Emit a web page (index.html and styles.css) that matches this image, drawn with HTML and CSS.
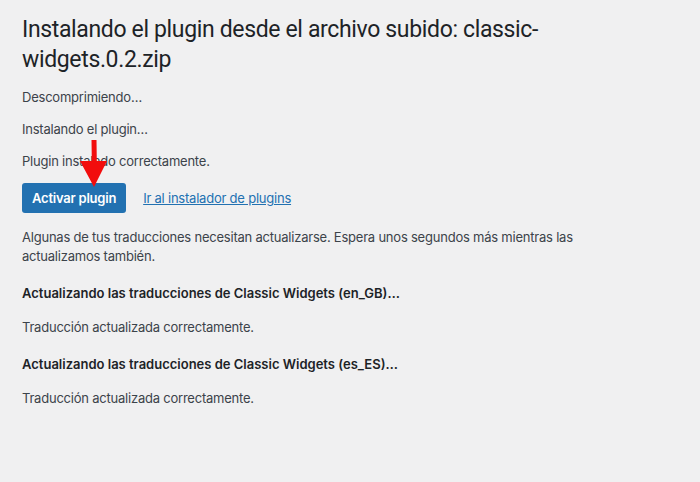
FILE: index.html
```html
<!DOCTYPE html>
<html lang="es">
<head>
    <meta charset="UTF-8">
    <meta name="viewport" content="width=device-width, initial-scale=1.0">
    <title>Instalar plugin</title>
    <link rel="stylesheet" href="styles.css">
</head>
<body>

    <div class="wrap">
        <h1>Instalando el plugin desde el archivo subido: classic-widgets.0.2.zip</h1>

        <p>Descomprimiendo…</p>
        <p>Instalando el plugin…</p>
        <p>Plugin instalado correctamente.</p>

        <p class="actions">
            <a href="#" class="button-primary">Activar plugin</a>
            <a href="#" class="link">Ir al instalador de plugins</a>
        </p>

        <div class="update-messages">
            <p>Algunas de tus traducciones necesitan actualizarse. Espera unos segundos más mientras las actualizamos también.</p>

            <h2>Actualizando las traducciones de Classic Widgets (en_GB)…</h2>
            <p>Traducción actualizada correctamente.</p>

            <h2>Actualizando las traducciones de Classic Widgets (es_ES)…</h2>
            <p>Traducción actualizada correctamente.</p>
        </div>

        <svg class="pointer" width="28" height="48" viewBox="0 0 28 48">
            <polygon points="11.5,0 16.5,0 16.8,21 27,21 14,47 0,21 11.8,21" fill="#f20d0d"/>
        </svg>
    </div>

</body>
</html>
```

FILE: styles.css
```css
body {
    margin: 0;
    background-color: #f0f0f1;
    color: #3c434a;
    font-family: Inter, "Noto Sans", sans-serif;
    font-size: 13px;
    line-height: 19px;
    letter-spacing: -0.22px;
}

.wrap {
    position: relative;
    padding: 15px 22px 20px;
}

h1 {
    font-family: Roboto, "Liberation Sans", sans-serif;
    font-size: 23px;
    font-weight: 400;
    line-height: 30px;
    letter-spacing: -0.35px;
    color: #1d2327;
    margin: 0;
    max-width: 560px;
}

p {
    margin: 13px 0;
}

.actions {
    display: flex;
    align-items: center;
    height: 30px;
    margin: -1px 0 15px;
}

.button-primary {
    display: inline-block;
    background-color: #2271b1;
    color: #fff;
    text-decoration: none;
    font-weight: 600;
    padding: 0 10px;
    line-height: 30px;
    border-radius: 3px;
}

.link {
    color: #2271b1;
    margin-left: 17px;
}

.update-messages {
    max-width: 600px;
}

.update-messages h2 {
    font-size: 13px;
    font-weight: 600;
    line-height: 19px;
    letter-spacing: 0;
    color: #1d2327;
    margin: 18px 0 15px;
}

.pointer {
    position: absolute;
    left: 80px;
    top: 140px;
}
```
